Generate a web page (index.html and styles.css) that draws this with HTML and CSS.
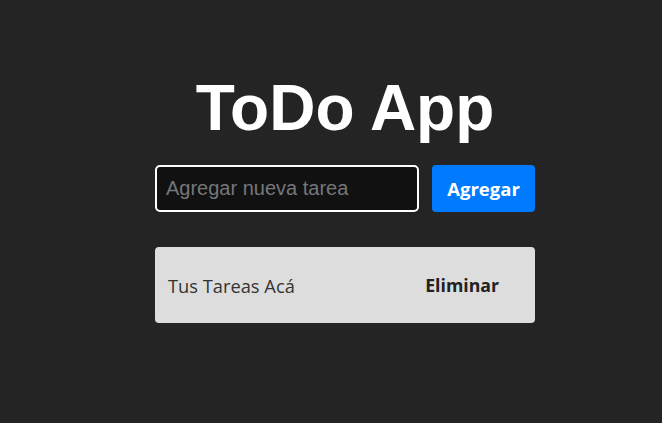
FILE: index.html
```html
<!DOCTYPE html>
<html lang="es">
<head>
<meta charset="utf-8">
<title>ToDo App</title>
<link rel="stylesheet" href="styles.css">
</head>
<body>
<main class="app">
  <h1 class="title">ToDo App</h1>
  <form class="add-form">
    <input class="add-input" type="text" placeholder="Agregar nueva tarea">
    <button class="add-btn" type="button">Agregar</button>
  </form>
  <ul class="task-list">
    <li class="task">
      <span class="task-text">Tus Tareas Acá</span>
      <button class="del-btn" type="button">Eliminar</button>
    </li>
  </ul>
</main>
</body>
</html>
```
FILE: styles.css
```css
html, body {
  margin: 0;
  padding: 0;
  background: #242424;
  height: 100%;
}
body {
  font-family: "Open Sans", "Noto Sans", sans-serif;
}
.app {
  width: 380px;
  margin: 0 auto;
  padding-left: 28px;
  padding-top: 72px;
  display: flex;
  flex-direction: column;
}
.title {
  margin: 0;
  font-family: "Liberation Sans", Arial, sans-serif;
  font-weight: bold;
  font-size: 64px;
  line-height: 72px;
  color: #fff;
  text-align: center;
}
.add-form {
  margin-top: 21px;
  display: flex;
  gap: 13px;
}
.add-input {
  box-sizing: border-box;
  width: 264px;
  height: 47px;
  background: #111;
  border: 2px solid #fff;
  border-radius: 5px;
  padding: 0 9px;
  font-family: "Liberation Sans", Arial, sans-serif;
  font-size: 20px;
  color: #ddd;
  outline: none;
}
.add-input::placeholder {
  color: #75777b;
}
.add-btn {
  box-sizing: border-box;
  width: 103px;
  height: 47px;
  border: none;
  border-radius: 4px;
  background: #007bff;
  color: #fff;
  font-family: "Open Sans", sans-serif;
  font-weight: bold;
  font-size: 18.5px;
  padding: 0;
}
.task-list {
  list-style: none;
  margin: 35px 0 0;
  padding: 0;
}
.task {
  box-sizing: border-box;
  height: 76px;
  background: #dddddd;
  border-radius: 4px;
  display: flex;
  align-items: center;
  justify-content: space-between;
  padding: 0 36px 0 13px;
}
.task-text {
  font-size: 18.3px;
  color: #333;
}
.del-btn {
  background: none;
  border: none;
  padding: 0;
  font-family: "Open Sans", sans-serif;
  font-weight: bold;
  font-size: 17.7px;
  color: #222;
}
```
